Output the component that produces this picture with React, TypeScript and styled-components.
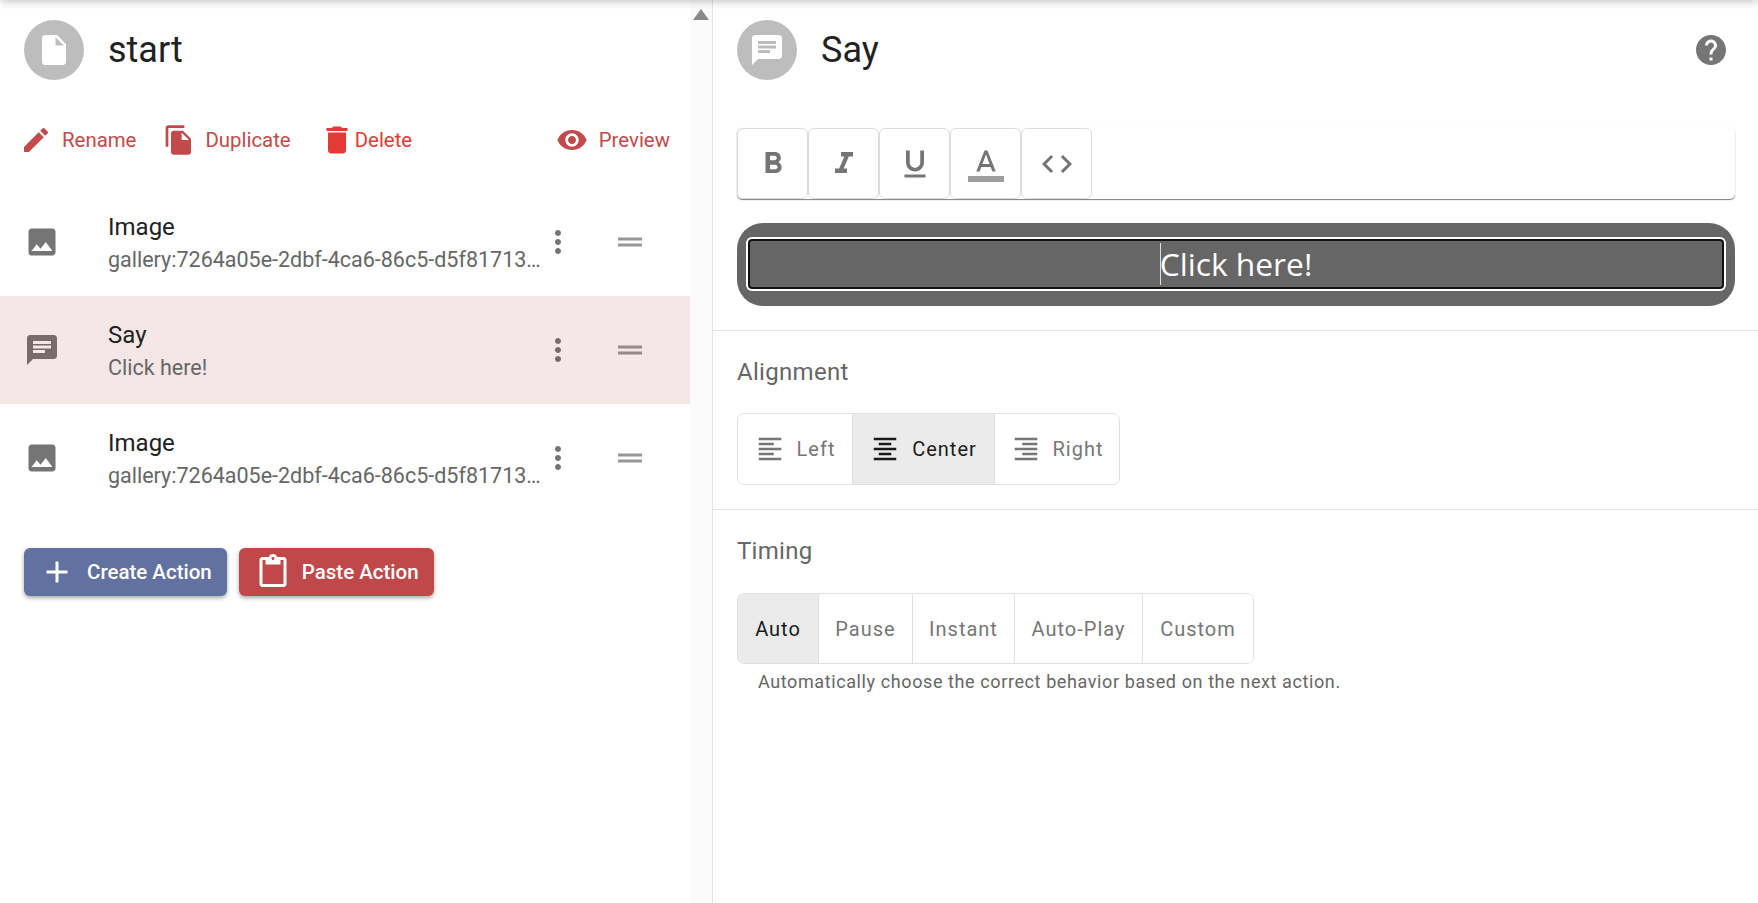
import React from 'react';
import styled, { createGlobalStyle } from 'styled-components';

const GlobalStyle = createGlobalStyle`
  html, body {
    margin: 0;
    padding: 0;
    background: #fff;
    font-family: Roboto, "Liberation Sans", sans-serif;
  }
`;

const Page = styled.div`
  position: relative;
  display: grid;
  grid-template-columns: 713px 1fr;
  height: 903px;
  overflow: hidden;
`;
const TopShade = styled.div`
  position: absolute;
  top: -4px;
  left: 0;
  right: 0;
  height: 4px;
  box-shadow: 0 0 8px rgba(0, 0, 0, 0.45);
`;
const LeftPane = styled.div`
  display: flex;
  border-right: 1px solid #e4e4e4;
`;
const LeftContent = styled.div`
  width: 690px;
  flex: none;
`;
const ScrollTrack = styled.div`
  flex: 1;
  background: #fbfbfb;
  display: flex;
  justify-content: center;
  padding-top: 9px;
`;
const ScrollArrow = styled.div`
  width: 0;
  height: 0;
  border-left: 8px solid transparent;
  border-right: 8px solid transparent;
  border-bottom: 11px solid #888;
`;
const RightPane = styled.div`
  display: flex;
  flex-direction: column;
`;

const Header = styled.div<{ $right?: boolean }>`
  display: flex;
  align-items: center;
  height: 60px;
  padding: 20px ${(p) => (p.$right ? '29px' : '24px')} 0 24px;
`;
const Avatar = styled.div`
  width: 60px;
  height: 60px;
  border-radius: 50%;
  background: #bdbdbd;
  color: #fff;
  display: flex;
  align-items: center;
  justify-content: center;
  flex: none;
`;
const Title = styled.div`
  margin-left: 24px;
  font-size: 36px;
  color: #212121;
  flex: 1;
`;
const HelpButton = styled.div`
  color: #757575;
`;

const ActionBar = styled.div`
  display: flex;
  align-items: center;
  height: 36px;
  margin-top: 42px;
  padding: 0 20px 0 20px;
`;
const ActionLink = styled.div<{ $danger?: boolean; $push?: boolean; $gap: number; $left?: number }>`
  display: flex;
  align-items: center;
  color: ${(p) => (p.$danger ? '#e53935' : '#c24a4a')};
  font-size: 20.4px;
  margin-left: ${(p) => (p.$push ? 'auto' : `${p.$left ?? 0}px`)};
  gap: ${(p) => p.$gap}px;
`;

const RowList = styled.div`
  margin-top: 30px;
`;
const Row = styled.div<{ $selected?: boolean }>`
  display: flex;
  align-items: center;
  height: 108px;
  padding-left: 24px;
  background: ${(p) => (p.$selected ? '#f5e7e7' : 'transparent')};
  color: ${(p) => (p.$selected ? '#786b6b' : '#757575')};
`;
const RowText = styled.div`
  margin-left: 48px;
  width: 433px;
  padding-top: 3px;
  flex: none;
`;
const RowTitle = styled.div`
  font-size: 24px;
  line-height: 30px;
  color: #212121;
`;
const RowSub = styled.div`
  font-size: 21.5px;
  line-height: 30px;
  margin-top: 3px;
  color: #666;
  white-space: nowrap;
`;
const RowHandles = styled.div`
  display: flex;
  align-items: center;
  margin-left: -1px;
  gap: 36px;
`;
const DragHandle = styled.div`
  opacity: 0.75;
`;

const ButtonRow = styled.div`
  display: flex;
  gap: 12px;
  margin: 36px 0 0 24px;
`;
const RaisedButton = styled.div<{ $color: string; $pad: number; $gap: number }>`
  display: flex;
  align-items: center;
  height: 48px;
  padding: 0 15px 0 ${(p) => p.$pad}px;
  gap: ${(p) => p.$gap}px;
  background: ${(p) => p.$color};
  color: #fff;
  font-size: 20.5px;
  font-weight: 500;
  border-radius: 6px;
  box-shadow: 0 2px 4px rgba(0, 0, 0, 0.35);
`;

const EditorSection = styled.div`
  padding: 48px 23px 24px 24px;
  border-bottom: 1px solid #e0e0e0;
`;
const FormatBar = styled.div`
  display: flex;
  height: 71px;
  background: #fff;
  border-radius: 5px;
  box-shadow: 0 1px 1px rgba(0, 0, 0, 0.5), 0 0 2px rgba(0, 0, 0, 0.06);
`;
const FormatButton = styled.div`
  width: 71px;
  height: 71px;
  box-sizing: border-box;
  border: 1px solid #dcdcdc;
  border-radius: 6px;
  color: #757575;
  display: flex;
  align-items: center;
  justify-content: center;
`;
const SpeechBox = styled.div`
  margin-top: 24px;
  height: 83px;
  box-sizing: border-box;
  padding: 16px 11px 17px 11px;
  background: #666;
  border-radius: 26px;
`;
const SpeechInner = styled.div`
  height: 100%;
  box-sizing: border-box;
  border: 2px solid #111;
  outline: 2px solid #fff;
  border-radius: 4px;
  padding-bottom: 1px;
  display: flex;
  align-items: center;
  justify-content: center;
  color: #fff;
  font-family: "Open Sans", "Noto Sans", sans-serif;
  font-size: 31.75px;
`;
const Caret = styled.span`
  display: inline-block;
  width: 1px;
  height: 42px;
  margin-right: -1px;
  background: #ddd;
`;

const Section = styled.div<{ $line?: boolean }>`
  padding: 26px 24px 0;
  ${(p) => (p.$line ? 'padding-bottom: 24px; border-bottom: 1px solid #e0e0e0;' : '')}
`;
const SectionLabel = styled.div`
  font-size: 24px;
  line-height: 30px;
  color: #666;
  letter-spacing: 0.3px;
`;
const Toggle = styled.div<{ $top: number; $h: number }>`
  display: inline-flex;
  margin-top: ${(p) => p.$top}px;
  border: 1px solid #e0e0e0;
  border-radius: 7px;
  box-sizing: border-box;
  overflow: hidden;
  height: ${(p) => p.$h}px;
  vertical-align: top;
`;
const ToggleItem = styled.div<{ $active?: boolean; $afterActive?: boolean; $w: number; $gap?: number }>`
  display: flex;
  align-items: center;
  justify-content: center;
  box-sizing: border-box;
  width: ${(p) => p.$w}px;
  gap: ${(p) => p.$gap ?? 0}px;
  font-size: 20px;
  letter-spacing: 1px;
  color: ${(p) => (p.$active ? '#1a1a1a' : '#767676')};
  background: ${(p) => (p.$active ? '#ebebeb' : '#fff')};
  & + & {
    border-left: 1px solid ${(p) => (p.$active || p.$afterActive ? '#c4c4c4' : '#e0e0e0')};
  }
`;
const HelpText = styled.div`
  margin: 8px 0 0 21px;
  font-size: 18px;
  line-height: 20px;
  letter-spacing: 0.6px;
  color: #666;
`;

type GlyphProps = { d: string; size: number; extra?: React.ReactNode };
function Glyph({ d, size, extra }: GlyphProps): React.ReactElement {
  return (
    <svg width={size} height={size} viewBox="0 0 24 24" fill="currentColor" style={{ flex: 'none', display: 'block' }}>
      <path d={d} />
      {extra}
    </svg>
  );
}

const ICONS = {
  file: 'M6 2c-1.1 0-1.99.9-1.99 2L4 20c0 1.1.89 2 1.99 2H18c1.1 0 2-.9 2-2V8l-6-6H6zm7 7V3.5L18.5 9H13z',
  chat: 'M20 2H4c-1.1 0-1.99.9-1.99 2L2 22l4-4h14c1.1 0 2-.9 2-2V4c0-1.1-.9-2-2-2zM6 9h12v2H6V9zm8 5H6v-2h8v2zm4-6H6V6h12v2z',
  edit: 'M3 17.25V21h3.75L17.81 9.94l-3.75-3.75L3 17.25zM20.71 7.04c.39-.39.39-1.02 0-1.41l-2.34-2.34c-.39-.39-1.02-.39-1.41 0l-1.83 1.83 3.75 3.75 1.83-1.83z',
  copy: 'M16 1H4c-1.1 0-2 .9-2 2v14h2V3h12V1zm-1 4l6 6v10c0 1.1-.9 2-2 2H7.99C6.89 23 6 22.1 6 21l.01-14c0-1.1.89-2 1.99-2h7zm-1 7h5.5L14 6.5V12z',
  trash: 'M6 19c0 1.1.9 2 2 2h8c1.1 0 2-.9 2-2V7H6v12zM19 4h-3.5l-1-1h-5l-1 1H5v2h14V4z',
  eye: 'M12 4.5C7 4.5 2.73 7.61 1 12c1.73 4.39 6 7.5 11 7.5s9.27-3.11 11-7.5c-1.73-4.39-6-7.5-11-7.5zM12 17c-2.76 0-5-2.24-5-5s2.24-5 5-5 5 2.24 5 5-2.24 5-5 5zm0-8c-1.66 0-3 1.34-3 3s1.34 3 3 3 3-1.34 3-3-1.34-3-3-3z',
  image: 'M21 19V5c0-1.1-.9-2-2-2H5c-1.1 0-2 .9-2 2v14c0 1.1.9 2 2 2h14c1.1 0 2-.9 2-2zM8.5 13.5l2.5 3.01L14.5 12l4.5 6H5l3.5-4.5z',
  more: 'M12 8c1.1 0 2-.9 2-2s-.9-2-2-2-2 .9-2 2 .9 2 2 2zm0 2c-1.1 0-2 .9-2 2s.9 2 2 2 2-.9 2-2-.9-2-2-2zm0 6c-1.1 0-2 .9-2 2s.9 2 2 2 2-.9 2-2-.9-2-2-2z',
  drag: 'M20 9H4v2h16V9zM4 15h16v-2H4v2z',
  plus: 'M19 13h-6v6h-2v-6H5v-2h6V5h2v6h6v2z',
  paste: 'M19 2h-4.18C14.4.84 13.3 0 12 0c-1.3 0-2.4.84-2.82 2H5c-1.1 0-2 .9-2 2v16c0 1.1.9 2 2 2h14c1.1 0 2-.9 2-2V4c0-1.1-.9-2-2-2zm-7 0c.55 0 1 .45 1 1s-.45 1-1 1-1-.45-1-1 .45-1 1-1zm7 18H5V4h2v3h10V4h2v16z',
  help: 'M12 2C6.48 2 2 6.48 2 12s4.48 10 10 10 10-4.48 10-10S17.52 2 12 2zm1 17h-2v-2h2v2zm2.07-7.75l-.9.92C13.45 12.9 13 13.5 13 15h-2v-.5c0-1.1.45-2.1 1.17-2.83l1.24-1.26c.37-.36.59-.86.59-1.41 0-1.1-.9-2-2-2s-2 .9-2 2H8c0-2.21 1.79-4 4-4s4 1.79 4 4c0 .88-.36 1.68-.93 2.25z',
  bold: 'M15.6 10.79c.97-.67 1.65-1.77 1.65-2.79 0-2.26-1.75-4-4-4H7v14h7.04c2.09 0 3.71-1.7 3.71-3.79 0-1.52-.86-2.82-2.15-3.42zM10 6.5h3c.83 0 1.5.67 1.5 1.5s-.67 1.5-1.5 1.5h-3v-3zm3.5 9H10v-3h3.5c.83 0 1.5.67 1.5 1.5s-.67 1.5-1.5 1.5z',
  italic: 'M10 4v3h2.21l-3.42 8H6v3h8v-3h-2.21l3.42-8H18V4z',
  underline: 'M12 17c3.31 0 6-2.69 6-6V3h-2.5v8c0 1.93-1.57 3.5-3.5 3.5S8.5 12.93 8.5 11V3H6v8c0 3.31 2.69 6 6 6zm-7 2v2h14v-2H5z',
  color: 'M11 3L5.5 17h2.25l1.12-3h6.25l1.12 3h2.25L13 3h-2zm-1.38 9L12 5.67 14.38 12H9.62z',
  code: 'M9.4 16.6L4.8 12l4.6-4.6L8 6l-6 6 6 6 1.4-1.4zm5.2 0l4.6-4.6-4.6-4.6L16 6l6 6-6 6-1.4-1.4z',
  left: 'M15 15H3v2h12v-2zm0-8H3v2h12V7zM3 13h18v-2H3v2zm0 8h18v-2H3v2zM3 3v2h18V3H3z',
  center: 'M7 15v2h10v-2H7zm-4 6h18v-2H3v2zm0-8h18v-2H3v2zm4-6v2h10V7H7zM3 3v2h18V3H3z',
  right: 'M3 21h18v-2H3v2zm6-4h12v-2H9v2zm-6-4h18v-2H3v2zm6-4h12V7H9v2zM3 3v2h18V3H3z',
};

const rows = [
  { icon: ICONS.image, title: 'Image', sub: 'gallery:7264a05e-2dbf-4ca6-86c5-d5f81713…' },
  { icon: ICONS.chat, title: 'Say', sub: 'Click here!', selected: true },
  { icon: ICONS.image, title: 'Image', sub: 'gallery:7264a05e-2dbf-4ca6-86c5-d5f81713…' },
];

const timings = [
  { label: 'Auto', w: 80, active: true },
  { label: 'Pause', w: 94, afterActive: true },
  { label: 'Instant', w: 102 },
  { label: 'Auto-Play', w: 128 },
  { label: 'Custom', w: 111 },
];

export default function App(): React.ReactElement {
  return (
    <Page>
      <GlobalStyle />
      <TopShade />
      <LeftPane>
        <LeftContent>
          <Header>
            <Avatar>
              <Glyph d={ICONS.file} size={36} />
            </Avatar>
            <Title>start</Title>
          </Header>
          <ActionBar>
            <ActionLink $gap={10}>
              <Glyph d={ICONS.edit} size={32} />
              Rename
            </ActionLink>
            <ActionLink $gap={10} $left={27}>
              <Glyph d={ICONS.copy} size={32} />
              Duplicate
            </ActionLink>
            <ActionLink $danger $gap={0} $left={28}>
              <Glyph d={ICONS.trash} size={36} />
              Delete
            </ActionLink>
            <ActionLink $push $gap={11}>
              <Glyph d={ICONS.eye} size={32} />
              Preview
            </ActionLink>
          </ActionBar>
          <RowList>
            {rows.map((row, i) => (
              <Row key={i} $selected={row.selected}>
                <Glyph d={row.icon} size={36} />
                <RowText>
                  <RowTitle>{row.title}</RowTitle>
                  <RowSub>{row.sub}</RowSub>
                </RowText>
                <RowHandles>
                  <Glyph d={ICONS.more} size={36} />
                  <DragHandle>
                    <Glyph d={ICONS.drag} size={36} />
                  </DragHandle>
                </RowHandles>
              </Row>
            ))}
          </RowList>
          <ButtonRow>
            <RaisedButton $color="#6272a0" $pad={15} $gap={12}>
              <Glyph d={ICONS.plus} size={36} />
              Create Action
            </RaisedButton>
            <RaisedButton $color="#c04848" $pad={16} $gap={11}>
              <Glyph d={ICONS.paste} size={36} />
              Paste Action
            </RaisedButton>
          </ButtonRow>
        </LeftContent>
        <ScrollTrack>
          <ScrollArrow />
        </ScrollTrack>
      </LeftPane>
      <RightPane>
        <Header $right>
          <Avatar>
            <Glyph d={ICONS.chat} size={36} />
          </Avatar>
          <Title>Say</Title>
          <HelpButton>
            <Glyph d={ICONS.help} size={36} />
          </HelpButton>
        </Header>
        <EditorSection>
          <FormatBar>
            <FormatButton>
              <Glyph d={ICONS.bold} size={36} />
            </FormatButton>
            <FormatButton>
              <Glyph d={ICONS.italic} size={36} />
            </FormatButton>
            <FormatButton>
              <Glyph d={ICONS.underline} size={36} />
            </FormatButton>
            <FormatButton>
              <Glyph d={ICONS.color} size={36} extra={<path d="M0 20h24v4H0z" fillOpacity={0.7} />} />
            </FormatButton>
            <FormatButton>
              <Glyph d={ICONS.code} size={36} />
            </FormatButton>
          </FormatBar>
          <SpeechBox>
            <SpeechInner>
              <Caret />
              Click here!
            </SpeechInner>
          </SpeechBox>
        </EditorSection>
        <Section $line>
          <SectionLabel>Alignment</SectionLabel>
          <Toggle $top={26} $h={72}>
            <ToggleItem $w={114} $gap={12}>
              <Glyph d={ICONS.left} size={30} />
              Left
            </ToggleItem>
            <ToggleItem $w={142} $gap={12} $active>
              <Glyph d={ICONS.center} size={30} />
              Center
            </ToggleItem>
            <ToggleItem $w={125} $gap={12} $afterActive>
              <Glyph d={ICONS.right} size={30} />
              Right
            </ToggleItem>
          </Toggle>
        </Section>
        <Section>
          <SectionLabel>Timing</SectionLabel>
          <Toggle $top={27} $h={71}>
            {timings.map((t) => (
              <ToggleItem key={t.label} $w={t.w} $active={t.active} $afterActive={t.afterActive}>
                {t.label}
              </ToggleItem>
            ))}
          </Toggle>
          <HelpText>Automatically choose the correct behavior based on the next action.</HelpText>
        </Section>
      </RightPane>
    </Page>
  );
}
